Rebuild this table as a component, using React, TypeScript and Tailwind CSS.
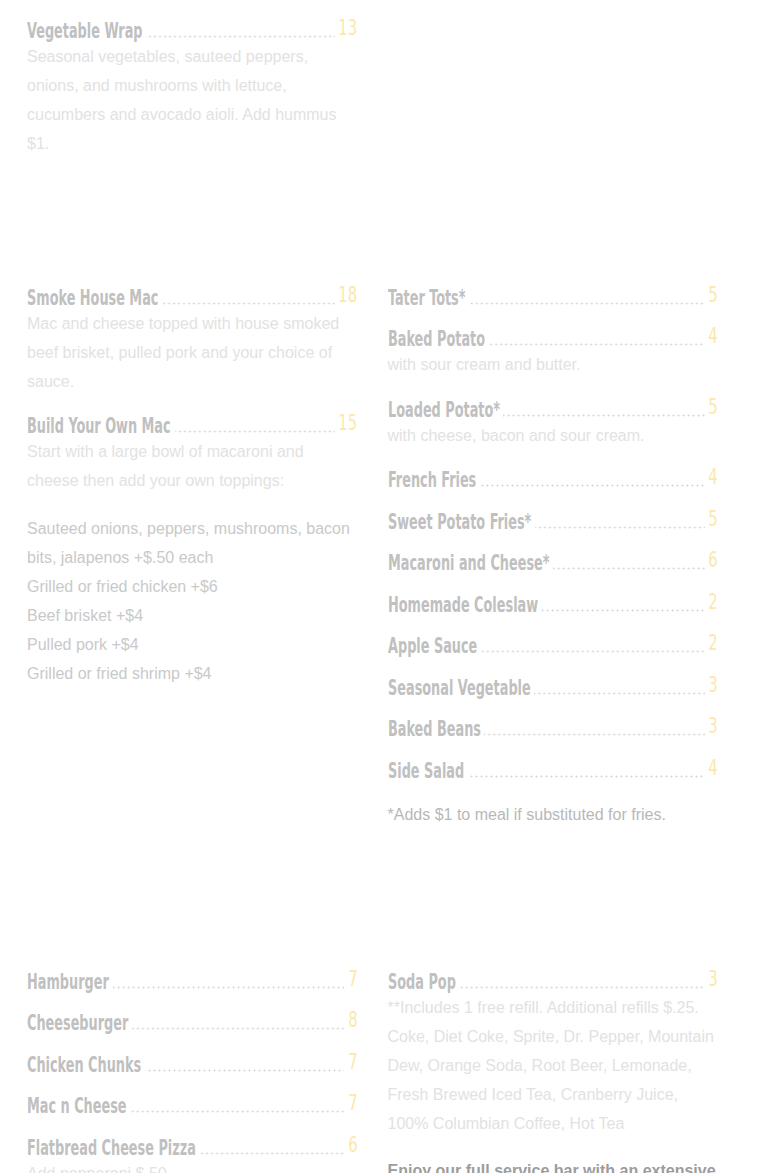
import { useLayoutEffect, useRef, useState } from 'react';

type MenuItem = {
  name: string;
  price: string;
  desc?: string;
};

const heading = "font-['DejaVu_Sans_Condensed','DejaVu_Sans',sans-serif]";
const body = "font-['Liberation_Sans',Arial,sans-serif]";

const wraps: MenuItem[] = [
  {
    name: 'Vegetable Wrap',
    price: '13',
    desc: 'Seasonal vegetables, sauteed peppers, onions, and mushrooms with lettuce, cucumbers and avocado aioli. Add hummus $1.',
  },
];

const macs: MenuItem[] = [
  {
    name: 'Smoke House Mac',
    price: '18',
    desc: 'Mac and cheese topped with house smoked beef brisket, pulled pork and your choice of sauce.',
  },
  {
    name: 'Build Your Own Mac',
    price: '15',
    desc: 'Start with a large bowl of macaroni and cheese then add your own toppings:',
  },
];

const addOns = [
  'Sauteed onions, peppers, mushrooms, bacon bits, jalapenos +$.50 each',
  'Grilled or fried chicken +$6',
  'Beef brisket +$4',
  'Pulled pork +$4',
  'Grilled or fried shrimp +$4',
];

const sides: MenuItem[] = [
  { name: 'Tater Tots*', price: '5' },
  { name: 'Baked Potato', price: '4', desc: 'with sour cream and butter.' },
  { name: 'Loaded Potato*', price: '5', desc: 'with cheese, bacon and sour cream.' },
  { name: 'French Fries', price: '4' },
  { name: 'Sweet Potato Fries*', price: '5' },
  { name: 'Macaroni and Cheese*', price: '6' },
  { name: 'Homemade Coleslaw', price: '2' },
  { name: 'Apple Sauce', price: '2' },
  { name: 'Seasonal Vegetable', price: '3' },
  { name: 'Baked Beans', price: '3' },
  { name: 'Side Salad', price: '4' },
];

const kids: MenuItem[] = [
  { name: 'Hamburger', price: '7' },
  { name: 'Cheeseburger', price: '8' },
  { name: 'Chicken Chunks', price: '7' },
  { name: 'Mac n Cheese', price: '7' },
  { name: 'Flatbread Cheese Pizza', price: '6', desc: 'Add pepperoni $.50' },
];

const drinks: MenuItem[] = [
  {
    name: 'Soda Pop',
    price: '3',
    desc: '**Includes 1 free refill. Additional refills $.25. Coke, Diet Coke, Sprite, Dr. Pepper, Mountain Dew, Orange Soda, Root Beer, Lemonade, Fresh Brewed Iced Tea, Cranberry Juice, 100% Columbian Coffee, Hot Tea',
  },
];

// condensed look: squeeze the glyphs and give back the space the squeeze leaves
const Squeezed = ({
  text,
  factor,
  side,
  className,
}: {
  text: string;
  factor: number;
  side: 'left' | 'right';
  className: string;
}) => {
  const ref = useRef<HTMLSpanElement>(null);
  const [trim, setTrim] = useState(0);

  useLayoutEffect(() => {
    if (ref.current) setTrim(ref.current.offsetWidth * (1 - factor));
  }, [text, factor]);

  return (
    <span
      ref={ref}
      className={className}
      style={{
        transform: `scaleX(${factor})`,
        transformOrigin: side,
        marginRight: side === 'left' ? -trim : undefined,
        marginLeft: side === 'right' ? -trim : undefined,
      }}
    >
      {text}
    </span>
  );
};

const Item = ({ item }: { item: MenuItem }) => (
  <div className="mb-[18.5px]">
    <div className="flex items-start h-[23px]">
      <Squeezed
        text={item.name}
        factor={0.68}
        side="left"
        className={`${heading} inline-block shrink-0 whitespace-nowrap text-[21px] font-bold leading-[24px] text-[#c0c0c0]`}
      />
      <div className="flex-1 min-w-0 h-[19px] mx-[4px] bg-[radial-gradient(circle,#d4d4d4_0.75px,transparent_1.25px)] bg-[length:5px_3px] bg-repeat-x bg-bottom" />
      <Squeezed
        text={item.price}
        factor={0.75}
        side="right"
        className={`${heading} inline-block shrink-0 text-[22px] leading-[17px] text-[#fbe8ab]`}
      />
    </div>
    {item.desc && <p className={`${body} text-[16px] leading-[29px] text-[#e2e2e2]`}>{item.desc}</p>}
  </div>
);

const App = () => {
  return (
    <div className="min-h-screen bg-white pl-[27px] pt-[19px] overflow-hidden">
      <div className="w-[691px]">
        <div className="grid grid-cols-2 gap-x-[30px]">
          <div>
            {wraps.map((item) => (
              <Item key={item.name} item={item} />
            ))}
          </div>
          <div />
        </div>

        <div className="grid grid-cols-2 gap-x-[30px] mt-[109px]">
          <div>
            {macs.map((item) => (
              <Item key={item.name} item={item} />
            ))}
            <ul className={`${body} text-[16px] leading-[29px] text-[#c9c9c9]`}>
              {addOns.map((a) => (
                <li key={a}>{a}</li>
              ))}
            </ul>
          </div>
          <div>
            {sides.map((item) => (
              <Item key={item.name} item={item} />
            ))}
            <p className={`${body} text-[16px] leading-[29px] text-[#b8b8b8]`}>
              *Adds $1 to meal if substituted for fries.
            </p>
          </div>
        </div>

        <div className="grid grid-cols-2 gap-x-[30px] mt-[140.5px]">
          <div>
            {kids.map((item) => (
              <Item key={item.name} item={item} />
            ))}
          </div>
          <div>
            {drinks.map((item) => (
              <Item key={item.name} item={item} />
            ))}
            <p className={`${body} text-[16px] leading-[29px] font-bold text-[#9c9c9c]`}>
              Enjoy our full service bar with an extensive selection of beer, wine and cocktails.
            </p>
          </div>
        </div>
      </div>
    </div>
  );
};

export default App;
